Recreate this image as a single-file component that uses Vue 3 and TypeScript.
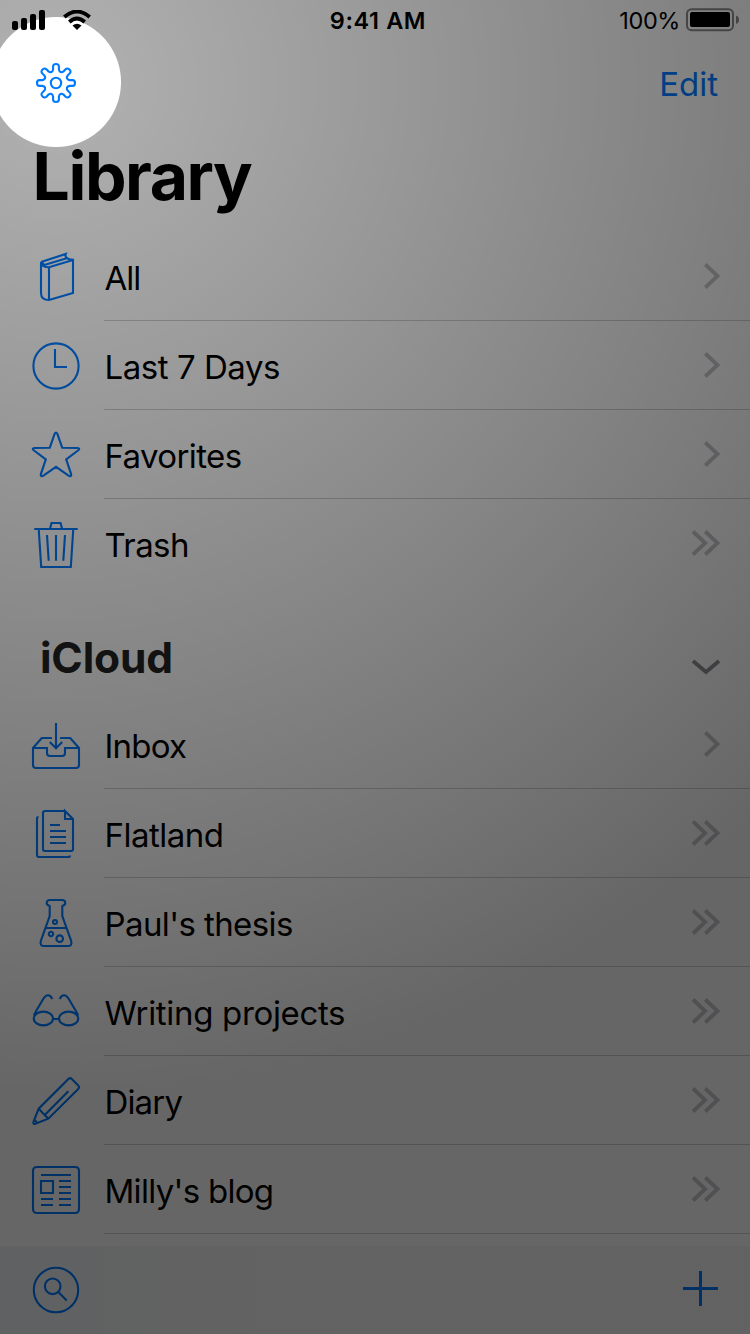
<script setup lang="ts">
interface Row {
  label: string
  icon: string
  nested: boolean
  tracking: number
}

const libraryRows: Row[] = [
  { label: 'All', icon: 'book', nested: false, tracking: -1 },
  { label: 'Last 7 Days', icon: 'clock', nested: false, tracking: -0.45 },
  { label: 'Favorites', icon: 'star', nested: false, tracking: -0.6 },
  { label: 'Trash', icon: 'trash', nested: true, tracking: -0.6 },
]

const cloudRows: Row[] = [
  { label: 'Inbox', icon: 'inbox', nested: false, tracking: -0.8 },
  { label: 'Flatland', icon: 'documents', nested: true, tracking: -0.5 },
  { label: "Paul's thesis", icon: 'flask', nested: true, tracking: -0.6 },
  { label: 'Writing projects', icon: 'glasses', nested: true, tracking: -0.33 },
  { label: 'Diary', icon: 'pencil', nested: true, tracking: -0.85 },
  { label: "Milly's blog", icon: 'news', nested: true, tracking: -0.7 },
]

const sections = [
  { title: '', rows: libraryRows },
  { title: 'iCloud', rows: cloudRows },
]

const icons: Record<string, string> = {
  book: 'M9 9L33.7 1C32.6 3.8 35 6.6 41 6.7V40L17 47C12 47 9 44.5 9 40V9C9 12 12 14.3 17 14.3L41 7M17 14.3V47M11.5 12.3L35.5 5M10 9.5L12 12',
  clock: 'M24 1.4A22.6 22.6 0 1 0 24 46.6A22.6 22.6 0 1 0 24 1.4M23 7V25H35',
  star: 'M22.7 2.7Q24 .3 25.3 2.7L30.2 16.7L45.5 17Q48.5 17.4 46.3 19.3L34.2 28.3L39.2 43.3Q39.4 46 36.9 44.9L24 35.8L11.1 44.9Q8.6 46 8.8 43.3L13.8 28.3L1.7 19.3Q-.5 17.4 2.5 17L17.8 16.7Z',
  trash: 'M2.3 9H45.7M18 9L19.5 3H28.5L30.2 9M6.7 9L9.2 47H38.8L41.3 9M15 15L16.7 40.7M24 15V40.7M33 15L31.3 40.7',
  inbox: 'M20 17H9.8L1 27V44Q1 47 4 47H44Q47 47 47 44V27L38.2 17H28M1 27H15V32Q15 35 18 35H30Q33 35 33 32V27H47M24 2V27M17.8 21L24 27.2L30.2 21',
  documents: 'M33 1H13Q11 1 11 3V39Q11 41 13 41H39Q41 41 41 39V9L33 1V9H41M18 15H28M18 21H34M18 27H34M18 33H34M6.5 7Q5 7 5 8.5V45Q5 47 7 47H36Q38 47 38 45.5',
  flask: 'M18 1H30Q33.3 1 33.3 4Q33.3 6 30.3 7V17L39.2 42Q40.3 47 36.5 47H11.5Q7.7 47 8.8 42L17.7 17V7Q14.7 6 14.7 4Q14.7 1 18 1M14 29H34M25 23A2 2 0 1 0 21 23A2 2 0 1 0 25 23M21.2 35A2.2 2.2 0 1 0 16.8 35A2.2 2.2 0 1 0 21.2 35M31 39.7A3.3 3.3 0 1 0 24.4 39.7A3.3 3.3 0 1 0 31 39.7',
  glasses: 'M21 30.5A9.6 6.9 0 1 0 1.8 30.5A9.6 6.9 0 1 0 21 30.5M46.2 30.5A9.6 6.9 0 1 0 27 30.5A9.6 6.9 0 1 0 46.2 30.5M21 31H27M2 27.5Q2.2 26.5 4 23.3L11.5 10.5C14 6.2 18 5.8 20.3 11M46 27.5Q45.8 26.5 44 23.3L36.5 10.5C34 6.2 30 5.8 27.7 11',
  pencil: 'M1.4 45L6.7 31.7L36.4 2Q38 .4 39.8 2L46 8.3Q48 10.2 46 12.2L16.3 41.7L3.3 46.8Q1 47.4 1.4 45M6.7 31.7L16.3 41.7M13 37.7L36.3 14.2M2 42.5L5.5 46',
  news: 'M5 1H43Q47 1 47 5V43Q47 47 43 47H5Q1 47 1 43V5Q1 1 5 1M9 9H39M9 15H21V27H9ZM27 15H39M27 21H39M27 27H39M27 33H39M27 39H39M9 33H21M9 39H21',
}

// Eight rounded teeth joined by inward curves.
function gearPath(): string {
  const at = (x: number, y: number, turn: number): string => {
    const a = (turn * Math.PI) / 4
    const px = 24 + x * Math.cos(a) - y * Math.sin(a)
    const py = 24 + x * Math.sin(a) + y * Math.cos(a)
    return `${px.toFixed(2)} ${py.toFixed(2)}`
  }
  let d = ''
  for (let i = 0; i < 8; i++) {
    d += i === 0 ? `M${at(-2.9, -13.6, i)}` : ''
    d += `L${at(-2.9, -16.5, i)}`
    d += `Q${at(-2.9, -19, i)} ${at(0, -19, i)}`
    d += `Q${at(2.9, -19, i)} ${at(2.9, -16.5, i)}`
    d += `L${at(2.9, -13.6, i)}`
    d += `C${at(3.4, -10.8, i)} ${at(-3.4, -10.8, i + 1)} ${at(-2.9, -13.6, i + 1)}`
  }
  return d + 'Z'
}
const gear = gearPath()
</script>

<template>
  <div class="screen">
    <header class="status">
      <div class="signals">
        <svg class="cell" width="33" height="20" viewBox="0 0 33 20">
          <rect x="0" y="11" width="6" height="9" rx="2" />
          <rect x="9" y="8" width="6" height="12" rx="2" />
          <rect x="18" y="4" width="6" height="16" rx="2" />
          <rect x="27" y="0" width="6" height="20" rx="2" />
        </svg>
        <svg class="wifi" width="28" height="20" viewBox="0 0 28 20">
          <path class="arc" d="M1.3 7Q14-4 26.7 7M6.3 12Q14 5.2 21.7 12" />
          <path d="M9.5 15.5Q14 12.2 18.5 15.5L14 20Z" />
        </svg>
      </div>
      <span class="time">9:41 AM</span>
      <div class="power">
        <span class="percent">100%</span>
        <svg width="54" height="24" viewBox="0 0 54 24">
          <rect class="shell" x="1" y="1.2" width="46" height="21" rx="4.5" />
          <rect x="4" y="4" width="40" height="15" rx="2" />
          <path class="nub" d="M50 7.5Q53 8.5 53 11.7T50 16Z" />
        </svg>
      </div>
    </header>

    <nav class="nav">
      <svg class="line-icon" width="48" height="48" viewBox="0 0 48 48">
        <path :d="gear" />
        <circle cx="24" cy="24" r="5.2" />
      </svg>
      <span class="edit">Edit</span>
    </nav>

    <h1 class="title">Library</h1>

    <section v-for="section in sections" :key="section.title">
      <div v-if="section.title" class="section-head">
        <h2>{{ section.title }}</h2>
        <svg class="chevron fold" width="30" height="16" viewBox="0 0 30 16">
          <path d="M2 2L15 13L28 2" />
        </svg>
      </div>
      <div v-for="row in section.rows" :key="row.label" class="row">
        <svg class="line-icon" width="48" height="48" viewBox="0 0 48 48">
          <path :d="icons[row.icon]" />
        </svg>
        <div class="cell-body">
          <span class="label" :style="{ letterSpacing: row.tracking + 'px' }">{{ row.label }}</span>
          <svg class="chevron" width="30" height="28" viewBox="0 0 30 28">
            <path v-if="row.nested" d="M3 2.5L15.2 14L3 25.5" />
            <path d="M15.3 2.5L27.5 14L15.3 25.5" />
          </svg>
        </div>
      </div>
    </section>

    <footer class="toolbar">
      <svg class="line-icon" width="48" height="48" viewBox="0 0 48 48">
        <circle cx="24" cy="24" r="22.2" />
        <circle cx="20.7" cy="20.3" r="7.8" />
        <path d="M26.3 26L34.7 34.5" />
      </svg>
      <svg class="line-icon plus" width="35" height="35" viewBox="0 0 35 35">
        <path d="M0 17.5H35M17.5 0V35" />
      </svg>
    </footer>

    <div class="dim"></div>
  </div>
</template>

<style>
body {
  background: #fff;
}
</style>

<style scoped>
.screen {
  position: relative;
  display: flex;
  flex-direction: column;
  width: 750px;
  height: 1334px;
  overflow: hidden;
  background: #fff;
  color: #000;
  font-family: Inter, 'Liberation Sans', sans-serif;
}
.status {
  display: grid;
  grid-template-columns: 1fr auto 1fr;
  align-items: center;
  height: 40px;
  padding: 0 10px 0 12px;
  font-size: 23.5px;
  line-height: 40px;
}
.signals {
  display: flex;
  gap: 18px;
}
.arc {
  fill: none;
  stroke: #000;
  stroke-width: 3.8;
}
.time {
  padding: 2px 0 0 4px;
  font-weight: 600;
  line-height: 38px;
  letter-spacing: 0.6px;
}
.power {
  display: flex;
  justify-content: flex-end;
  align-items: center;
  gap: 6px;
}
.percent {
  padding-top: 2px;
  line-height: 38px;
  letter-spacing: -0.4px;
}
.shell {
  fill: none;
  stroke: #888;
  stroke-width: 2;
}
.nub {
  fill: #888;
}
.nav {
  display: flex;
  justify-content: space-between;
  align-items: center;
  height: 88px;
  padding: 0 32px;
  box-sizing: border-box;
}
.nav .line-icon {
  margin-bottom: 2px;
}
.edit {
  color: #007aff;
  font-size: 33px;
}
.title {
  flex: none;
  height: 104px;
  margin: 0;
  padding-left: 32.5px;
  font-size: 66px;
  font-weight: 700;
  line-height: 97px;
  letter-spacing: -1.4px;
}
.row {
  display: flex;
  height: 89px;
  padding-left: 32px;
}
.row .line-icon {
  margin-top: 21px;
}
.cell-body {
  display: flex;
  flex: 1;
  align-items: center;
  justify-content: space-between;
  box-sizing: border-box;
  margin-left: 24px;
  padding-right: 30px;
  border-bottom: 1px solid #cfced3;
}
section:first-of-type .row:last-child .cell-body {
  border-bottom-color: transparent;
}
.label {
  padding: 4px 0 0 0.5px;
  font-size: 33px;
  line-height: 40px;
  white-space: nowrap;
}
.line-icon {
  flex: none;
  overflow: visible;
  fill: none;
  stroke: #007aff;
  stroke-width: 2.1;
}
.chevron {
  fill: none;
  stroke: #c7c7cc;
  stroke-width: 3.8;
}
.chevron.fold {
  margin-top: 21px;
  stroke: #8e8e93;
}
.section-head {
  display: flex;
  align-items: center;
  justify-content: space-between;
  height: 112px;
  padding: 28px 29px 0 40px;
  box-sizing: border-box;
}
.section-head h2 {
  margin: 0;
  color: #222;
  font-size: 42.5px;
  font-weight: 700;
  line-height: 50px;
  letter-spacing: -0.15px;
}
.chevron.fold {
  margin-top: 17px;
}
.toolbar {
  display: flex;
  align-items: center;
  justify-content: space-between;
  box-sizing: border-box;
  height: 88px;
  margin-top: 12px;
  padding: 0 32px;
  background: linear-gradient(90deg, #eef3f6 0, #f1f3f5 80px, #f4f5f5 160px, #f6f6f6 420px);
}
.line-icon.plus {
  margin-bottom: 3px;
  stroke-width: 3;
}
.dim {
  position: absolute;
  inset: 0;
  background: radial-gradient(circle at 56px 82px, transparent 64.5px, rgba(0, 0, 0, 0.32) 65.5px, rgba(0, 0, 0, 0.6) 1010px);
  pointer-events: none;
}
</style>
